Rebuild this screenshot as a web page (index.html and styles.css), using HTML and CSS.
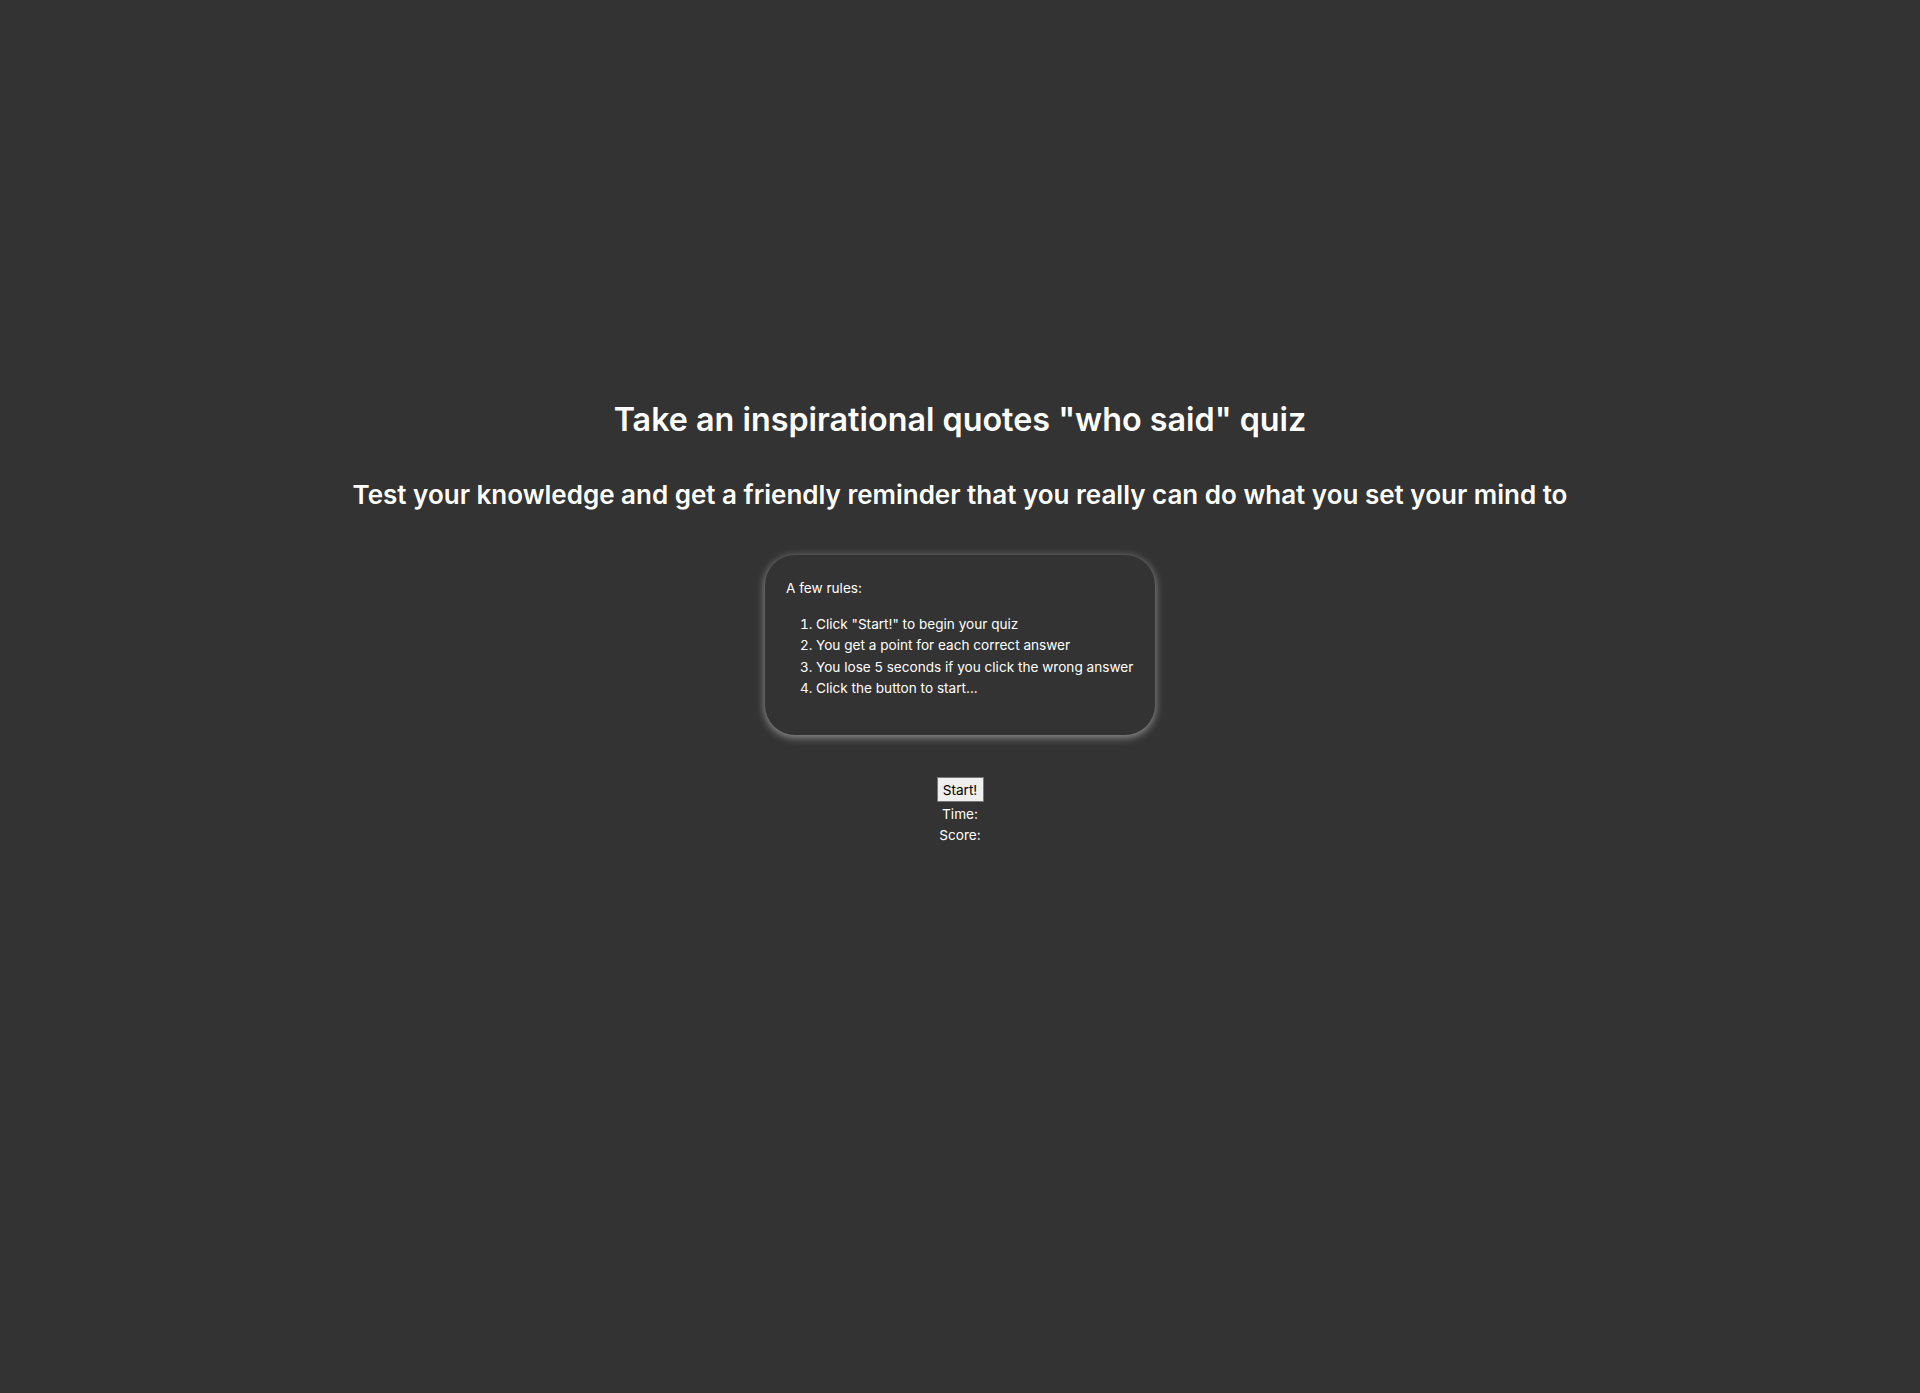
FILE: index.html
```html
<!DOCTYPE html>
<html lang="en">
<head>
<meta charset="utf-8">
<title>Who Said Quiz</title>
<link rel="stylesheet" href="styles.css">
</head>
<body>
<main class="page">
  <h1 class="title">Take an inspirational quotes "who said" quiz</h1>
  <h2 class="subtitle">Test your knowledge and get a friendly reminder that you really can do what you set your mind to</h2>
  <section class="rules">
    <p class="rules-head">A few rules:</p>
    <ol class="rules-list">
      <li>Click "Start!" to begin your quiz</li>
      <li>You get a point for each correct answer</li>
      <li>You lose 5 seconds if you click the wrong answer</li>
      <li>Click the button to start...</li>
    </ol>
  </section>
  <div class="controls">
    <button class="start-btn" type="button">Start!</button>
    <div class="stats">
      <div class="stat">Time:</div>
      <div class="stat">Score:</div>
    </div>
  </div>
</main>
</body>
</html>
```
FILE: styles.css
```css
html, body {
  margin: 0;
  padding: 0;
  background: #333333;
}
body {
  color: #ffffff;
  font-family: Inter, "Noto Sans", "Liberation Sans", sans-serif;
  min-height: 1393px;
}
.page {
  padding-top: 398px;
  text-align: center;
}
.title {
  margin: 0;
  font-size: 32.3px;
  font-weight: 600;
  line-height: 44px;
}
.subtitle {
  margin: 37px 0 0;
  font-size: 26px;
  font-weight: 600;
  line-height: 32px;
}
.rules {
  box-sizing: border-box;
  width: 390px;
  height: 180px;
  margin: 44px auto 0;
  padding: 24px 20px 18px 21px;
  border-radius: 30px;
  box-shadow: 0 2px 9px rgba(255, 255, 255, 0.5);
  text-align: left;
  font-size: 13.6px;
}
.rules-head {
  margin: 0 0 17px;
  line-height: 18px;
}
.rules-list {
  margin: 0;
  padding-left: 30px;
  line-height: 21.4px;
}
.controls {
  margin-top: 42px;
  display: flex;
  flex-direction: column;
  align-items: center;
  font-size: 13.6px;
}
.start-btn {
  box-sizing: border-box;
  font-family: inherit;
  font-size: 13.6px;
  color: #000;
  background: #efefef;
  border: 1px solid #767676;
  border-radius: 0;
  padding: 0 5px;
  height: 25px;
  width: 47px;
}
.stats {
  margin-top: 2px;
}
.stat {
  line-height: 21px;
}
```
